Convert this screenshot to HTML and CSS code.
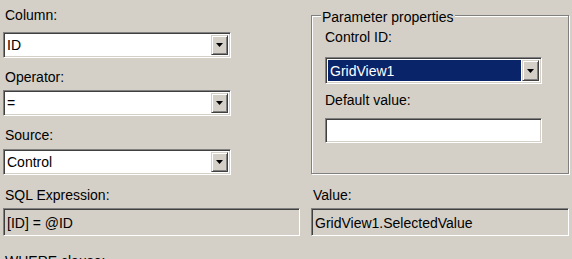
FILE: index.html
```html
<!DOCTYPE html>
<html>
<head>
<meta charset="utf-8">
<link rel="stylesheet" href="styles.css">
</head>
<body>
<div class="dialog">
  <div class="left">
    <div class="label lbl-column">Column:</div>
    <div class="combo combo-column">
      <span class="combo-text">ID</span>
      <span class="combo-btn"><svg width="7" height="4" viewBox="0 0 7 4"><polygon points="0,0 7,0 3.5,4" fill="#000"/></svg></span>
    </div>
    <div class="label lbl-operator">Operator:</div>
    <div class="combo combo-operator">
      <span class="combo-text">=</span>
      <span class="combo-btn"><svg width="7" height="4" viewBox="0 0 7 4"><polygon points="0,0 7,0 3.5,4" fill="#000"/></svg></span>
    </div>
    <div class="label lbl-source">Source:</div>
    <div class="combo combo-source">
      <span class="combo-text">Control</span>
      <span class="combo-btn"><svg width="7" height="4" viewBox="0 0 7 4"><polygon points="0,0 7,0 3.5,4" fill="#000"/></svg></span>
    </div>
  </div>
  <fieldset class="group">
    <legend class="group-title">Parameter properties</legend>
    <div class="label lbl-control">Control ID:</div>
    <div class="combo combo-control">
      <span class="combo-text selected">GridView1</span>
      <span class="combo-btn"><svg width="7" height="4" viewBox="0 0 7 4"><polygon points="0,0 7,0 3.5,4" fill="#000"/></svg></span>
    </div>
    <div class="label lbl-default">Default value:</div>
    <div class="textbox default-box"></div>
  </fieldset>
  <div class="expr">
    <div class="label lbl-bottom">SQL Expression:</div>
    <div class="textbox readonly">[ID] = @ID</div>
  </div>
  <div class="value">
    <div class="label lbl-bottom lbl-value">Value:</div>
    <div class="textbox readonly">GridView1.SelectedValue</div>
  </div>
  <div class="label lbl-where">WHERE clause:</div>
</div>
</body>
</html>
```
FILE: styles.css
```css
html, body {
  margin: 0;
  padding: 0;
}
body {
  width: 572px;
  height: 259px;
  overflow: hidden;
  background: #d4d0c8;
  font-family: "Liberation Sans", Arial, sans-serif;
  font-size: 14px;
  line-height: 16px;
  color: #000;
}
.dialog {
  display: grid;
  grid-template-columns: 297px 258px;
  column-gap: 11px;
  padding-left: 3px;
  align-items: start;
}
.left {
  display: flex;
  flex-direction: column;
}
.label {
  height: 16px;
  padding-left: 2px;
  white-space: nowrap;
}
.lbl-column { margin-top: 7px; }
.combo-column { margin-top: 9px; }
.lbl-operator { margin-top: 11px; }
.combo-operator { margin-top: 5px; }
.lbl-source { margin-top: 11px; }
.combo-source { margin-top: 6px; }

.combo {
  box-sizing: border-box;
  display: flex;
  width: 228px;
  height: 26px;
  padding: 2px;
  background: #fff;
  border: 1px solid;
  border-color: #808080 #fff #fff #808080;
  box-shadow: inset 1px 1px 0 #404040, inset -1px -1px 0 #d4d0c8;
}
.combo-text {
  flex: 1;
  display: flex;
  align-items: center;
  padding-left: 1px;
  white-space: nowrap;
}
.combo-text.selected {
  background: #0a246a;
  color: #fff;
  margin-right: 1px;
  padding-left: 2px;
}
.combo-btn {
  box-sizing: border-box;
  width: 17px;
  display: flex;
  align-items: center;
  justify-content: center;
  background: #d4d0c8;
  border: 1px solid;
  border-color: #d4d0c8 #404040 #404040 #d4d0c8;
  box-shadow: inset 1px 1px 0 #fff, inset -1px -1px 0 #808080;
}
.combo-btn svg { display: block; }

.group {
  grid-column: 2;
  grid-row: 1;
  box-sizing: border-box;
  width: 258px;
  height: 169px;
  margin: 5px 0 0 0;
  padding: 4px 0 0 13px;
  border: 1px solid #808080;
  box-shadow: inset 1px 1px 0 #fff, 1px 1px 0 #fff;
  min-width: 0;
}
.group-title {
  padding: 4px 1px 0 1px;
  margin-left: -4px;
  background: #d4d0c8;
  line-height: 16px;
}
.lbl-control { padding-left: 0; }
.combo-control { width: 217px; height: 27px; margin-top: 12px; }
.lbl-default { padding-left: 0; margin-top: 8px; }
.textbox {
  box-sizing: border-box;
  height: 28px;
  padding: 2px 2px 0 3px;
  display: flex;
  align-items: center;
  background: #fff;
  border: 1px solid;
  border-color: #808080 #fff #fff #808080;
  box-shadow: inset 1px 1px 0 #404040, inset -1px -1px 0 #d4d0c8;
  white-space: nowrap;
}
.default-box { width: 217px; height: 25px; margin-top: 10px; }
.readonly { background: #d4d0c8; }

.expr { grid-column: 1; grid-row: 2; }
.value { grid-column: 2; grid-row: 2; }
.lbl-bottom { margin-top: 12px; margin-bottom: 5px; }
.lbl-value { padding-left: 2px; }
.lbl-where {
  grid-column: 1 / 3;
  grid-row: 3;
  margin-top: 17px;
}
```
